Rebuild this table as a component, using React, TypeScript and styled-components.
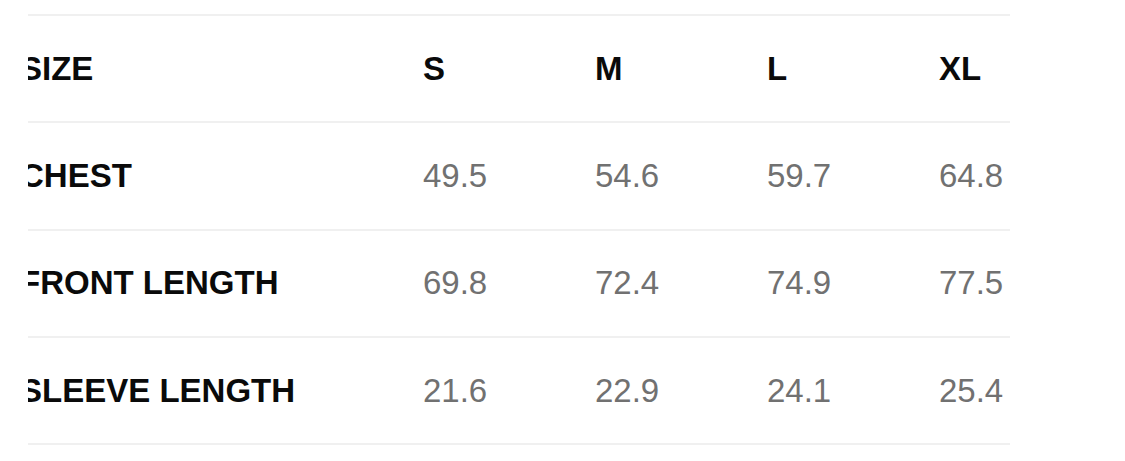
import styled, { createGlobalStyle } from "styled-components";

const sizes = ["S", "M", "L", "XL"];

const rows = [
  { label: "CHEST", values: ["49.5", "54.6", "59.7", "64.8"] },
  { label: "FRONT LENGTH", values: ["69.8", "72.4", "74.9", "77.5"] },
  { label: "SLEEVE LENGTH", values: ["21.6", "22.9", "24.1", "25.4"] },
];

export default function App() {
  return (
    <>
      <GlobalStyle />
      <Page>
        <Table>
          <Row>
            <HeadCell>SIZE</HeadCell>
            {sizes.map((s) => (
              <HeadCell key={s}>{s}</HeadCell>
            ))}
          </Row>
          {rows.map((row) => (
            <Row key={row.label}>
              <HeadCell>{row.label}</HeadCell>
              {row.values.map((v, i) => (
                <ValueCell key={i}>{v}</ValueCell>
              ))}
            </Row>
          ))}
        </Table>
      </Page>
    </>
  );
}

const GlobalStyle = createGlobalStyle`
  html, body {
    margin: 0;
    padding: 0;
    background: #ffffff;
  }
`;

const Page = styled.main`
  width: 1125px;
  height: 461px;
  padding: 14px 0 0 28px;
  box-sizing: border-box;
  font-family: "Liberation Sans", Arial, sans-serif;
  overflow: hidden;
`;

// the table is scrolled a little to the left, so the labels are cut at the edge
const Table = styled.div`
  width: 982px;
  overflow: hidden;
  border-bottom: 2px solid #f0f0f0;
`;

const Row = styled.div`
  display: grid;
  grid-template-columns: 403px repeat(4, 172px);
  align-items: center;
  margin-left: -8px;
  height: 105.3px;
  border-top: 2px solid #f0f0f0;
`;

const HeadCell = styled.div`
  font-size: 33px;
  font-weight: 700;
  color: #0a0a0a;
  white-space: nowrap;
`;

const ValueCell = styled.div`
  font-size: 33px;
  font-weight: 400;
  color: #717171;
  white-space: nowrap;
`;
